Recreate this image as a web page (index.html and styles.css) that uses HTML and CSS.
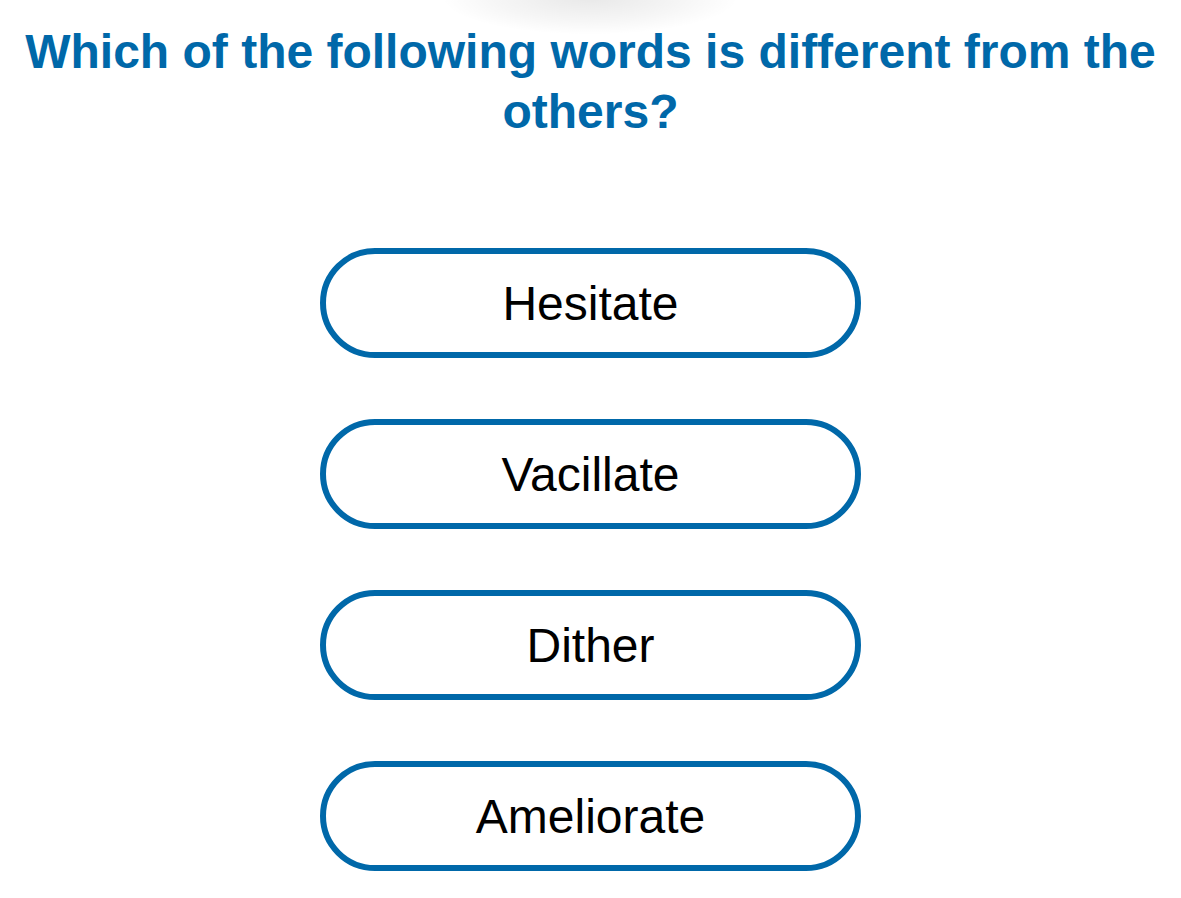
FILE: index.html
```html
<!DOCTYPE html>
<html lang="en">
<head>
<meta charset="utf-8">
<title>Quiz</title>
<link rel="stylesheet" href="styles.css">
</head>
<body>
<div class="top-shadow"></div>
<main class="quiz">
  <h1 class="question">Which of the following words is different from the others?</h1>
  <div class="options">
    <button class="option">Hesitate</button>
    <button class="option">Vacillate</button>
    <button class="option">Dither</button>
    <button class="option">Ameliorate</button>
  </div>
</main>
</body>
</html>
```
FILE: styles.css
```css
html, body {
  margin: 0;
  padding: 0;
  background: #ffffff;
}
body {
  font-family: "Liberation Sans", Arial, sans-serif;
  width: 1181px;
  height: 898px;
  overflow: hidden;
  position: relative;
}
.top-shadow {
  position: absolute;
  left: 440px;
  top: -40px;
  width: 300px;
  height: 75px;
  border-radius: 50%;
  background: radial-gradient(ellipse at center, rgba(0,0,0,0.09) 0%, rgba(0,0,0,0.035) 45%, rgba(0,0,0,0) 70%);
  pointer-events: none;
}
.quiz {
  display: flex;
  flex-direction: column;
  align-items: center;
  padding-top: 22px;
}
.question {
  margin: 0;
  font-size: 48px;
  font-weight: bold;
  line-height: 60px;
  color: #0068a9;
  text-align: center;
  width: 1181px;
}
.options {
  display: flex;
  flex-direction: column;
  gap: 61px;
  margin-top: 106px;
}
.option {
  width: 541px;
  height: 110px;
  box-sizing: border-box;
  border: 6px solid #0068a9;
  border-radius: 55px;
  background: #ffffff;
  font-family: "Liberation Sans", Arial, sans-serif;
  font-size: 48px;
  color: #000000;
  padding: 0;
  cursor: pointer;
}
```
